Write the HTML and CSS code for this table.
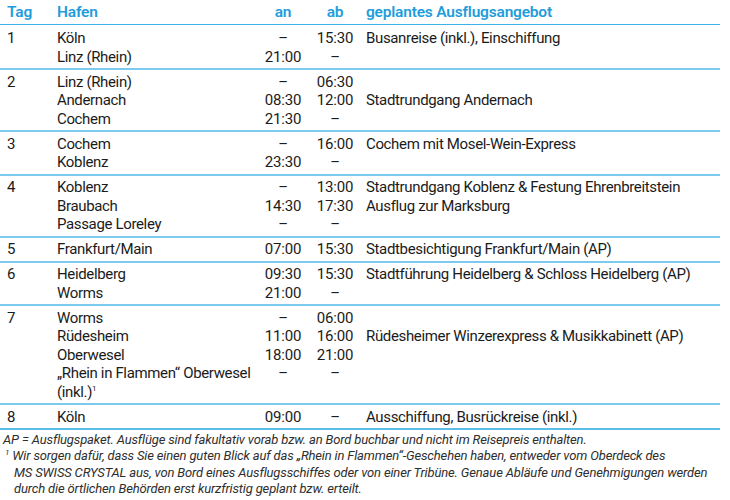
FILE: index.html
```html
<!DOCTYPE html>
<html lang="de">
<head>
<meta charset="utf-8">
<link rel="stylesheet" href="styles.css">
</head>
<body>
<table class="plan">
  <colgroup>
    <col class="c-tag"><col class="c-hafen"><col class="c-an"><col class="c-ab"><col class="c-desc">
  </colgroup>
  <thead>
    <tr><th class="tag">Tag</th><th class="hafen">Hafen</th><th class="t">an</th><th class="t">ab</th><th class="desc">geplantes Ausflugsangebot</th></tr>
  </thead>
  <tbody>
    <tr><td>1</td><td>Köln<br>Linz (Rhein)</td><td class="t">–<br>21:00</td><td class="t">15:30<br>–</td><td class="desc">Busanreise (inkl.), Einschiffung</td></tr>
    <tr><td>2</td><td>Linz (Rhein)<br>Andernach<br>Cochem</td><td class="t">–<br>08:30<br>21:30</td><td class="t">06:30<br>12:00<br>–</td><td class="desc"><br>Stadtrundgang Andernach</td></tr>
    <tr><td>3</td><td>Cochem<br>Koblenz</td><td class="t">–<br>23:30</td><td class="t">16:00<br>–</td><td class="desc">Cochem mit Mosel-Wein-Express</td></tr>
    <tr><td>4</td><td>Koblenz<br>Braubach<br>Passage Loreley</td><td class="t">–<br>14:30<br>–</td><td class="t">13:00<br>17:30<br>–</td><td class="desc">Stadtrundgang Koblenz &amp; Festung Ehrenbreitstein<br>Ausflug zur Marksburg</td></tr>
    <tr><td>5</td><td>Frankfurt/Main</td><td class="t">07:00</td><td class="t">15:30</td><td class="desc">Stadtbesichtigung Frankfurt/Main (AP)</td></tr>
    <tr><td>6</td><td>Heidelberg<br>Worms</td><td class="t">09:30<br>21:00</td><td class="t">15:30<br>–</td><td class="desc">Stadtführung Heidelberg &amp; Schloss Heidelberg (AP)</td></tr>
    <tr><td>7</td><td>Worms<br>Rüdesheim<br>Oberwesel<br><span class="nw">„Rhein in Flammen“ Oberwesel</span><br>(inkl.)<sup>1</sup></td><td class="t">–<br>11:00<br>18:00<br>–</td><td class="t">06:00<br>16:00<br>21:00<br>–</td><td class="desc"><br>Rüdesheimer Winzerexpress &amp; Musikkabinett (AP)</td></tr>
    <tr class="last"><td>8</td><td>Köln</td><td class="t">09:00</td><td class="t">–</td><td class="desc">Ausschiffung, Busrückreise (inkl.)</td></tr>
  </tbody>
</table>
<div class="notes">
  <p class="note">AP = Ausflugspaket. Ausflüge sind fakultativ vorab bzw. an Bord buchbar und nicht im Reisepreis enthalten.</p>
  <p class="note fn"><sup>1</sup> Wir sorgen dafür, dass Sie einen guten Blick auf das „Rhein in Flammen“-Geschehen haben, entweder vom Oberdeck des <span class="nw">MS SWISS CRYSTAL</span> aus, von Bord eines Ausflugsschiffes oder von einer Tribüne. Genaue Abläufe und Genehmigungen werden durch die örtlichen Behörden erst kurzfristig geplant bzw. erteilt.</p>
</div>
</body>
</html>
```

FILE: styles.css
```css
html, body {
  margin: 0;
  padding: 0;
  background: #ffffff;
}
body {
  font-family: Roboto, "Liberation Sans", sans-serif;
  color: #1b1b1b;
  width: 730px;
}
.nw { white-space: nowrap; }
.plan {
  width: 720px;
  border-collapse: collapse;
  table-layout: fixed;
  font-size: 15px;
  line-height: 18.5px;
  letter-spacing: -0.35px;
}
.c-tag { width: 50px; }
.c-hafen { width: 208px; }
.c-an { width: 50px; }
.c-ab { width: 54px; }
.c-desc { width: 358px; }
.plan th {
  color: #1f9ddb;
  font-weight: 600;
  font-size: 15.5px;
  letter-spacing: -0.2px;
  text-align: left;
  height: 24px;
  padding: 0 0 0 7px;
  vertical-align: middle;
  border-bottom: 1px solid #3cb1e6;
}
.plan th.desc { padding-left: 4px; }
.plan th.t { text-align: center; padding: 0; }
.plan td {
  padding: 2.5px 0 2px 7px;
  vertical-align: top;
  border-top: 2px solid #7ccbef;
}
.plan tbody tr:first-child td { border-top: none; padding-top: 4px; }
.plan td.t { text-align: center; padding-left: 0; letter-spacing: -0.2px; }
.plan td.desc { padding-left: 4px; }
.plan tr.last td { border-bottom: 2px solid #5dbde9; }
.plan sup { font-size: 8px; line-height: 0; vertical-align: 6px; }
.notes {
  font-style: italic;
  font-size: 13px;
  line-height: 16.3px;
  letter-spacing: -0.15px;
  color: #2e2e2e;
  padding: 2px 0 0 3px;
  width: 716px;
}
.note { margin: 0; }
.note.fn { padding-left: 11px; text-indent: -9px; }
.note sup { font-size: 8px; line-height: 0; vertical-align: 5px; }
```
